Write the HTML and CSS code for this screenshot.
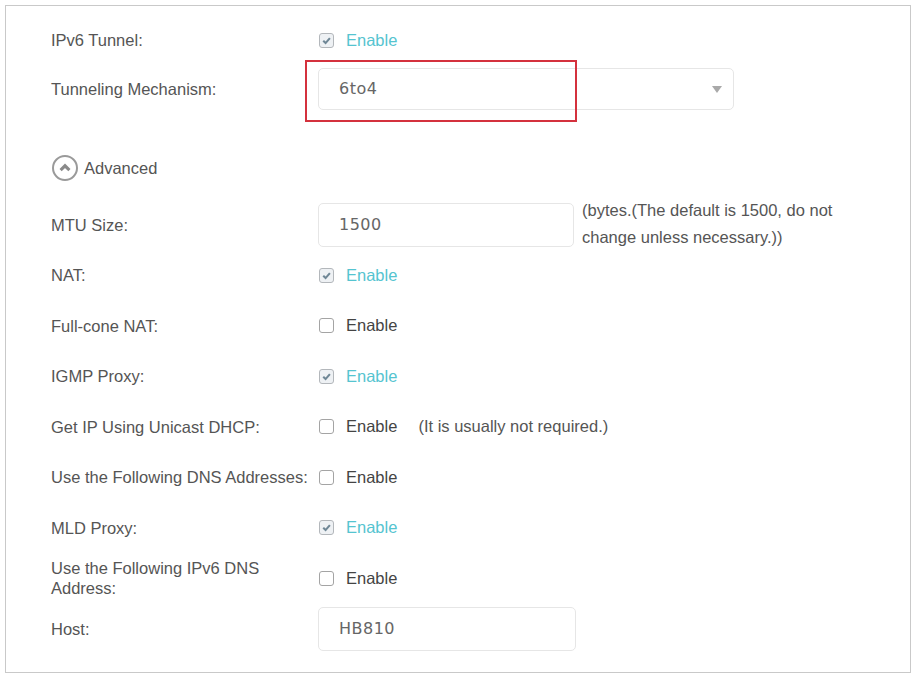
FILE: index.html
```html
<!DOCTYPE html>
<html lang="en">
<head>
    <meta charset="UTF-8">
    <title>IPv6 Tunnel</title>
    <link rel="stylesheet" href="styles.css">
</head>
<body>
    <div class="panel">
        <div class="row">
            <div class="label">IPv6 Tunnel:</div>
            <div class="check on">
                <span class="box"><svg viewBox="0 0 10 10"><path d="M2.5 5.2 L4.3 7 L7.6 3.2"/></svg></span>Enable
            </div>
        </div>

        <div class="row row-select">
            <div class="label">Tunneling Mechanism:</div>
            <div class="select">
                6to4
                <span class="arrow"></span>
                <div class="highlight"></div>
            </div>
        </div>

        <div class="row row-advanced">
            <span class="adv-icon"><svg viewBox="0 0 10 10"><path d="M3 6 L5 4 L7 6"/></svg></span>
            <span class="adv-text">Advanced</span>
        </div>

        <div class="row row-mtu">
            <div class="label">MTU Size:</div>
            <div class="input">1500</div>
            <div class="note">(bytes.(The default is 1500, do not change unless necessary.))</div>
        </div>

        <div class="row">
            <div class="label">NAT:</div>
            <div class="check on">
                <span class="box"><svg viewBox="0 0 10 10"><path d="M2.5 5.2 L4.3 7 L7.6 3.2"/></svg></span>Enable
            </div>
        </div>

        <div class="row">
            <div class="label">Full-cone NAT:</div>
            <div class="check"><span class="box"></span>Enable</div>
        </div>

        <div class="row">
            <div class="label">IGMP Proxy:</div>
            <div class="check on">
                <span class="box"><svg viewBox="0 0 10 10"><path d="M2.5 5.2 L4.3 7 L7.6 3.2"/></svg></span>Enable
            </div>
        </div>

        <div class="row">
            <div class="label">Get IP Using Unicast DHCP:</div>
            <div class="check"><span class="box"></span>Enable</div>
            <div class="hint">(It is usually not required.)</div>
        </div>

        <div class="row">
            <div class="label">Use the Following DNS Addresses:</div>
            <div class="check"><span class="box"></span>Enable</div>
        </div>

        <div class="row">
            <div class="label">MLD Proxy:</div>
            <div class="check on">
                <span class="box"><svg viewBox="0 0 10 10"><path d="M2.5 5.2 L4.3 7 L7.6 3.2"/></svg></span>Enable
            </div>
        </div>

        <div class="row">
            <div class="label label-wrap">Use the Following IPv6 DNS Address:</div>
            <div class="check"><span class="box"></span>Enable</div>
        </div>

        <div class="row">
            <div class="label">Host:</div>
            <div class="input input-host">HB810</div>
        </div>
    </div>
</body>
</html>
```

FILE: styles.css
```css
* {
    box-sizing: border-box;
}

body {
    margin: 0;
    background-color: #fff;
    font-family: "Liberation Sans", Arial, sans-serif;
    font-size: 16.5px;
    color: #555;
}

.panel {
    margin: 5px;
    width: 906px;
    height: 668px;
    border: 1px solid #c9c9c9;
    padding: 9px 0 0 45px;
}

.row {
    display: flex;
    align-items: center;
    height: 50.5px;
}

.row-select {
    margin-top: -2px;
}

.row-advanced {
    margin-top: 29px;
}

.row-mtu {
    margin-top: 6px;
}

.label {
    width: 267px;
    flex-shrink: 0;
    line-height: 20px;
}

.label-wrap {
    padding-right: 50px;
}

.check {
    display: flex;
    align-items: center;
    color: #444;
}

.check .box {
    width: 15px;
    height: 15px;
    margin: 0 12px 0 1px;
    border: 1.5px solid #a4a4a4;
    border-radius: 3px;
    background-color: #fff;
}

.check.on {
    color: #55c4d0;
}

.check.on .box {
    background-color: #eef1f4;
    border-color: #b3b7bb;
}

.box svg {
    display: block;
    width: 100%;
    height: 100%;
    fill: none;
    stroke: #6f8796;
    stroke-width: 1.6;
}

.select, .input {
    position: relative;
    height: 42px;
    border: 1px solid #e6e6e6;
    border-radius: 5px;
    padding-left: 20px;
    display: flex;
    align-items: center;
    font-family: "DejaVu Sans", Verdana, sans-serif;
    font-size: 16px;
    color: #666;
    letter-spacing: 0.5px;
}

.select {
    width: 416px;
}

.arrow {
    position: absolute;
    right: 11px;
    top: 17px;
    border-left: 5.5px solid transparent;
    border-right: 5.5px solid transparent;
    border-top: 7px solid #a9a9a9;
}

.highlight {
    position: absolute;
    left: -14px;
    top: -9px;
    width: 272px;
    height: 62px;
    border: 2px solid #d4313d;
}

.input {
    width: 256px;
    height: 44px;
}

.input-host {
    width: 258px;
}

.note {
    width: 275px;
    margin-left: 8px;
    margin-top: -2px;
    line-height: 27px;
}

.hint {
    margin-left: 21px;
}

.adv-icon {
    width: 26px;
    height: 26px;
    border: 2px solid #9a9a9a;
    border-radius: 50%;
    margin-left: 1px;
}

.adv-icon svg {
    display: block;
    width: 100%;
    height: 100%;
    fill: none;
    stroke: #8a8a8a;
    stroke-width: 1.4;
}

.adv-text {
    margin-left: 6px;
    color: #555;
}
```
